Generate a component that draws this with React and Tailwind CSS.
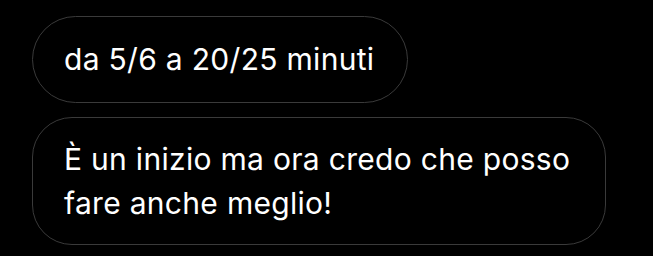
export default function App() {
  return (
    <div className="w-[653px] h-[256px] bg-black overflow-hidden flex flex-col items-start pl-[32px] pt-[16px] gap-[14px]" style={{ fontFamily: 'Inter, "Noto Sans", sans-serif' }}>
      <div className="h-[87px] w-[376px] rounded-full border-[1.5px] border-[#3a3a3a] flex items-center pl-[31px] text-white text-[30px] tracking-[0.3px]">
        da 5/6 a 20/25 minuti
      </div>
      <div className="w-[574px] h-[128px] rounded-[40px] border-[1.5px] border-[#3a3a3a] flex items-center pl-[31px] text-white text-[30px] leading-[44px] tracking-[0.3px]">
        <div>È un inizio ma ora credo che posso<br />fare anche meglio!</div>
      </div>
    </div>
  );
}
